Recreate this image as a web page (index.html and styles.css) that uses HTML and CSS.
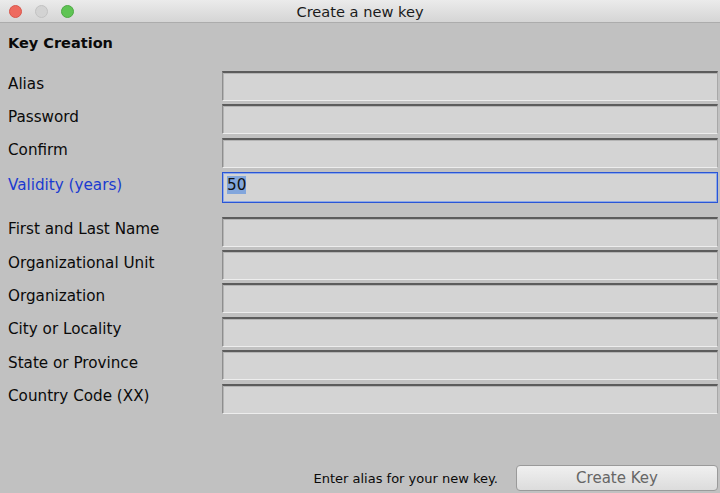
FILE: index.html
```html
<!DOCTYPE html>
<html lang="en">
<head>
    <meta charset="UTF-8">
    <title>Create a new key</title>
    <link rel="stylesheet" href="styles.css">
</head>
<body>

    <div class="titlebar">
        <div class="lights">
            <span class="light red"></span>
            <span class="light grey"></span>
            <span class="light green"></span>
        </div>
        <div class="title">Create a new key</div>
    </div>

    <div class="window">
        <h1>Key Creation</h1>

        <div class="form">
            <label>Alias</label>
            <div class="field"></div>

            <label>Password</label>
            <div class="field"></div>

            <label>Confirm</label>
            <div class="field"></div>

            <label class="active">Validity (years)</label>
            <div class="field focus"><span class="sel">50</span></div>
        </div>

        <div class="form second">
            <label>First and Last Name</label>
            <div class="field"></div>

            <label>Organizational Unit</label>
            <div class="field"></div>

            <label>Organization</label>
            <div class="field"></div>

            <label>City or Locality</label>
            <div class="field"></div>

            <label>State or Province</label>
            <div class="field"></div>

            <label>Country Code (XX)</label>
            <div class="field"></div>
        </div>

        <div class="footer">
            <span class="status">Enter alias for your new key.</span>
            <button>Create Key</button>
        </div>
    </div>

</body>
</html>
```

FILE: styles.css
```css
body {
    margin: 0;
    height: 493px;
    overflow: hidden;
    background: #c1c1c1;
    font-family: 'DejaVu Sans', sans-serif;
    color: #0a0a0a;
    display: flex;
    flex-direction: column;
}

.titlebar {
    height: 22px;
    background: linear-gradient(#ebebeb, #d5d5d5);
    border-bottom: 1px solid #acacac;
    display: flex;
    align-items: center;
    justify-content: center;
    position: relative;
}

.lights {
    position: absolute;
    left: 9px;
    top: 5px;
    display: flex;
    gap: 13px;
}

.light {
    width: 13px;
    height: 13px;
    border-radius: 50%;
    box-sizing: border-box;
}

.red {
    background: #ee6a5f;
    border: 1px solid #d8564c;
}

.grey {
    background: #d3d3d3;
    border: 1px solid #c2c2c2;
}

.green {
    background: #5fc454;
    border: 1px solid #4ea944;
}

.title {
    font-size: 14.6px;
    color: #1a1a1a;
    padding-top: 1px;
}

.window {
    flex: 1;
    display: flex;
    flex-direction: column;
    padding: 0 2px 2px 8px;
}

h1 {
    font-size: 14.5px;
    font-weight: bold;
    margin: 12px 0 20px;
}

.form {
    display: grid;
    grid-template-columns: 214px 1fr;
    row-gap: 3.4px;
    align-items: center;
}

.form.second {
    margin-top: 13.5px;
}

label {
    font-size: 15.2px;
    margin-top: -5px;
}

label.active {
    color: #1a3bd0;
}

.field {
    height: 30px;
    box-sizing: border-box;
    background: #d4d4d4;
    border-top: 2px solid #5c5c5c;
    border-left: 1px solid #8e8e8e;
    border-right: 1px solid #a8a8a8;
    border-bottom: 1px solid #ededed;
    box-shadow: inset 1px 1px 0 #b4b4b4;
}

.field.focus {
    height: 31px;
    margin-top: 1px;
    border: 1px solid #2a55d6;
    box-shadow: inset 0 0 0 1px #8ea9e6;
    padding: 3px 4px;
    font-size: 15.2px;
}

.sel {
    background: #82a6dc;
    color: #111;
}

.footer {
    margin-top: auto;
    display: flex;
    justify-content: flex-end;
    align-items: center;
    gap: 18px;
}

.status {
    font-size: 13px;
}

button {
    width: 202px;
    height: 26px;
    border: 1px solid #9a9a9a;
    border-radius: 4px;
    background: linear-gradient(#f0f0f0, #dcdcdc);
    color: #666;
    font-family: 'DejaVu Sans', sans-serif;
    font-size: 15px;
}
```
